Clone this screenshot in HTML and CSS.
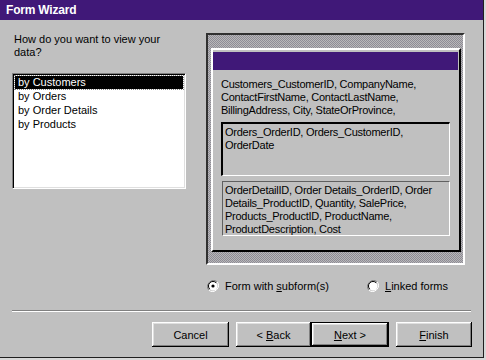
FILE: index.html
```html
<!DOCTYPE html>
<html lang="en">
<head>
    <meta charset="UTF-8">
    <meta name="viewport" content="width=device-width, initial-scale=1.0">
    <title>Form Wizard</title>
    <link rel="stylesheet" href="styles.css">
</head>
<body>
    <div class="window">
        <div class="title-bar">Form Wizard</div>

        <div class="main">
            <div class="left-col">
                <p class="question">How do you want to view your data?</p>
                <div class="listbox">
                    <div class="item selected">by Customers</div>
                    <div class="item">by Orders</div>
                    <div class="item">by Order Details</div>
                    <div class="item">by Products</div>
                </div>
            </div>

            <div class="right-col">
                <div class="preview">
                    <div class="form-panel">
                        <div class="form-caption"></div>
                        <p class="fields">Customers_CustomerID, CompanyName, ContactFirstName, ContactLastName, BillingAddress, City, StateOrProvince,</p>
                        <div class="subform sub-one">Orders_OrderID, Orders_CustomerID, OrderDate</div>
                        <div class="subform sub-two">OrderDetailID, Order Details_OrderID, Order Details_ProductID, Quantity, SalePrice, Products_ProductID, ProductName, ProductDescription, Cost</div>
                    </div>
                </div>

                <div class="radios">
                    <label class="radio first">
                        <svg width="12" height="12" viewBox="0 0 12 12">
                            <path d="M10.2 1.8 A6 6 0 0 0 1.8 10.2" fill="none" stroke="#808080" stroke-width="1"/>
                            <path d="M10.2 1.8 A6 6 0 0 1 1.8 10.2" fill="none" stroke="#ffffff" stroke-width="1"/>
                            <circle cx="6" cy="6" r="4.5" fill="#fff"/>
                            <path d="M9.2 2.8 A4.5 4.5 0 0 0 2.8 9.2" fill="none" stroke="#000" stroke-width="1"/>
                            <circle cx="6" cy="6" r="1.6" fill="#000"/>
                        </svg>
                        <span>Form with <u>s</u>ubform(s)</span>
                    </label>
                    <label class="radio">
                        <svg width="12" height="12" viewBox="0 0 12 12">
                            <path d="M10.2 1.8 A6 6 0 0 0 1.8 10.2" fill="none" stroke="#808080" stroke-width="1"/>
                            <path d="M10.2 1.8 A6 6 0 0 1 1.8 10.2" fill="none" stroke="#ffffff" stroke-width="1"/>
                            <circle cx="6" cy="6" r="4.5" fill="#fff"/>
                            <path d="M9.2 2.8 A4.5 4.5 0 0 0 2.8 9.2" fill="none" stroke="#000" stroke-width="1"/>
                        </svg>
                        <span><u>L</u>inked forms</span>
                    </label>
                </div>
            </div>
        </div>

        <div class="separator"></div>

        <div class="buttons">
            <button class="btn cancel">Cancel</button>
            <button class="btn back">&lt; <u>B</u>ack</button>
            <button class="btn next"><u>N</u>ext &gt;</button>
            <button class="btn finish"><u>F</u>inish</button>
        </div>
    </div>
</body>
</html>
```

FILE: styles.css
```css
*{
    margin: 0;
    padding: 0;
    box-sizing: border-box;
}
body{
    width: 486px;
    height: 360px;
    background-color: #d8d8d8;
    font-family: "Liberation Sans", Arial, sans-serif;
    font-size: 11px;
    color: #000;
    overflow: hidden;
}
.window{
    width: 484px;
    height: 358px;
    background-color: #c0c0c0;
    border-right: 1px solid #202020;
    border-bottom: 1px solid #202020;
    display: flex;
    flex-direction: column;
}
.title-bar{
    height: 20px;
    background-color: #401878;
    color: #fff;
    font-weight: bold;
    font-size: 12px;
    letter-spacing: -0.2px;
    line-height: 20px;
    padding-left: 6px;
}
.main{
    display: flex;
    padding: 13px 0 0 12px;
}
.left-col{
    width: 174px;
    margin-right: 20px;
}
.question{
    line-height: 13px;
    padding-left: 2px;
    width: 160px;
}
.listbox{
    margin-top: 14px;
    height: 116px;
    background-color: #fff;
    border-top: 1px solid #808080;
    border-left: 1px solid #808080;
    border-right: 1px solid #fff;
    border-bottom: 1px solid #fff;
    box-shadow: inset 1px 1px 0 #000, inset -1px -1px 0 #dfdfdf;
    padding: 2px;
}
.item{
    height: 14px;
    line-height: 13px;
    padding-left: 3px;
}
.selected{
    height: 13px;
    margin-bottom: 1px;
    background-color: #000;
    color: #fff;
    outline: 1px dotted #888;
}
.right-col{
    width: 259px;
}
.preview{
    height: 232px;
    border-top: 2px solid #303030;
    border-left: 2px solid #303030;
    border-right: 2px solid #fff;
    border-bottom: 2px solid #fff;
    background-color: #9a98a0;
    background-image: repeating-conic-gradient(#8e8b96 0 25%, #b8b8b8 0 50%);
    background-size: 2px 2px;
    padding: 13px 2px 11px 3px;
}
.form-panel{
    height: 204px;
    background-color: #c0c0c0;
    border-top: 2px solid #fff;
    border-left: 2px solid #fff;
    border-right: 2px solid #000;
    border-bottom: 2px solid #000;
    padding: 2px 1px 0 0;
    letter-spacing: -0.25px;
}
.form-caption{
    height: 18px;
    background-color: #401878;
}
.fields{
    margin: 8px 8px 0 8px;
    line-height: 13px;
}
.subform{
    margin-left: 8px;
    width: 229px;
    line-height: 13px;
    padding-left: 2px;
}
.sub-one{
    margin-top: 5px;
    height: 54px;
    border-top: 2px solid #000;
    border-left: 2px solid #000;
    border-right: 1px solid #fff;
    border-bottom: 1px solid #fff;
    padding-top: 2px;
}
.sub-two{
    margin-top: 5px;
    height: 55px;
    border-top: 1px solid #606060;
    border-left: 1px solid #606060;
    border-right: 1px solid #fff;
    border-bottom: 1px solid #fff;
    padding-top: 2px;
    margin-left: 9px;
    width: 228px;
}
.radios{
    display: flex;
    align-items: center;
    margin-top: 14px;
    height: 14px;
    padding-left: 1px;
}
.radio{
    display: flex;
    align-items: center;
    gap: 6px;
}
.radio.first{
    width: 160px;
}
.separator{
    margin: 17px 12px 0 12px;
    height: 2px;
    border-top: 1px solid #808080;
    border-bottom: 1px solid #fff;
}
.buttons{
    display: flex;
    justify-content: flex-end;
    padding-right: 11px;
    margin-top: 10px;
}
.btn{
    height: 25px;
    width: 76px;
    font-family: "Liberation Sans", Arial, sans-serif;
    font-size: 11px;
    color: #000;
    background-color: #c0c0c0;
    border: none;
    box-shadow: inset -1px -1px 0 #000, inset 1px 1px 0 #fff, inset -2px -2px 0 #808080, inset 2px 2px 0 #dfdfdf;
}
.cancel{
    width: 77px;
    margin-right: 7px;
}
.back{
    width: 75px;
}
.next{
    width: 78px;
    border: 1px solid #000;
    margin-right: 7px;
}
.finish{
    width: 76px;
}
```
